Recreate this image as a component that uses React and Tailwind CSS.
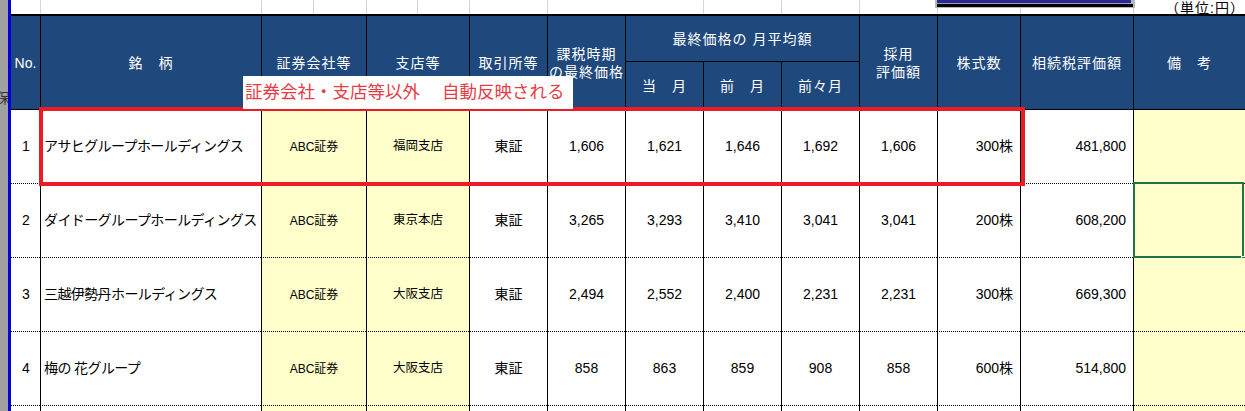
import React from "react";

const font = "font-['Liberation_Sans','Noto_Sans_CJK_JP',sans-serif]";
const cols =
  "grid grid-cols-[29px_221px_105px_103px_78px_78px_78px_78px_78px_78px_83px_113px_112px]";

const rows = [
  ["1", "アサヒグループホールディングス", "福岡支店", "1,606", "1,621", "1,646", "1,692", "1,606", "300株", "481,800"],
  ["2", "ダイドーグループホールディングス", "東京本店", "3,265", "3,293", "3,410", "3,041", "3,041", "200株", "608,200"],
  ["3", "三越伊勢丹ホールディングス", "大阪支店", "2,494", "2,552", "2,400", "2,231", "2,231", "300株", "669,300"],
  ["4", "梅の 花グループ", "大阪支店", "858", "863", "859", "908", "858", "600株", "514,800"],
  ["", "", "", "", "", "", "", "", "", ""],
];

const topCells = [29, 221, 52, 53, 51, 52, 78, 156, 78, 78, 78, 83, 113];

const Head = ({ className = "", children }) => (
  <div
    className={`bg-[#1f497d] text-white text-[14px] tracking-[1px] flex items-center justify-center text-center leading-[18px] border-b border-black ${className}`}
  >
    {children}
  </div>
);

// solid column rule on the left, dotted row rule underneath
const Cell = ({ className = "", children }) => (
  <div
    className={`relative flex items-center border-l border-b border-solid [border-bottom-style:dotted] border-black ${className}`}
  >
    {children}
  </div>
);

const App = () => {
  return (
    <div className={`relative w-[1245px] h-[411px] overflow-hidden bg-white flex text-black ${font}`}>
      {/* row header strip */}
      <div className="relative w-[8px] shrink-0 bg-[#a0a0a0] overflow-hidden">
        <span className="absolute top-[88px] right-[-2px] text-[14px] text-[#333]">保</span>
      </div>
      <div className="w-[3px] shrink-0 bg-[#0000e0]" />

      <div className="flex-1 flex flex-col">
        {/* blank sheet row */}
        <div className="flex h-[14px] shrink-0 overflow-hidden">
          {topCells.map((w, i) => (
            <div
              key={i}
              style={{ width: w }}
              className={`shrink-0 h-full ${i > 0 ? "border-l border-[#d6d6d6]" : ""}`}
            />
          ))}
          <div className="flex-1 border-l border-[#d6d6d6] flex justify-end items-end">
            <span className="text-[14px] leading-[14px] mb-[-1px] tracking-[1px] whitespace-nowrap">（単位:円）</span>
          </div>
        </div>

        {/* header */}
        <div className={`${cols} grid-rows-[46px_48px] shrink-0 border-t-2 border-black`}>
          <Head className="row-span-2 text-[12px] tracking-normal">No.</Head>
          <Head className="row-span-2 border-l">銘　柄</Head>
          <Head className="row-span-2 border-l">証券会社等</Head>
          <Head className="row-span-2 border-l">支店等</Head>
          <Head className="row-span-2 border-l">取引所等</Head>
          <Head className="row-span-2 border-l">
            課税時期
            <br />
            の最終価格
          </Head>
          <Head className="col-span-3 border-l">最終価格の 月平均額</Head>
          <Head className="row-span-2 border-l">
            採用
            <br />
            評価額
          </Head>
          <Head className="row-span-2 border-l">株式数</Head>
          <Head className="row-span-2 border-l">相続税評価額</Head>
          <Head className="row-span-2 border-l">備　考</Head>
          <Head className="col-start-7 row-start-2 border-l">当　月</Head>
          <Head className="col-start-8 row-start-2 border-l">前　月</Head>
          <Head className="col-start-9 row-start-2 border-l">前々月</Head>
        </div>

        {/* body */}
        {rows.map((r, i) => (
          <div key={i} className={`${cols} h-[74px] shrink-0 text-[14px]`}>
            <div className="flex items-center justify-center border-b border-dotted border-black pl-[1px]">
              {r[0]}
            </div>
            <Cell className="pl-[3px] tracking-[-0.6px] whitespace-nowrap">{r[1]}</Cell>
            <Cell className="bg-[#ffffcc] justify-center text-[12px]">{r[0] && "ABC証券"}</Cell>
            <Cell className="bg-[#ffffcc] justify-center text-[12.5px]">{r[2]}</Cell>
            <Cell className="justify-center">{r[0] && "東証"}</Cell>
            <Cell className="justify-center">{r[3]}</Cell>
            <Cell className="justify-center">{r[4]}</Cell>
            <Cell className="justify-center">{r[5]}</Cell>
            <Cell className="justify-center">{r[6]}</Cell>
            <Cell className="justify-center">{r[7]}</Cell>
            <Cell className="justify-end pr-[7px]">{r[8]}</Cell>
            <Cell className="justify-end pr-[7px]">{r[9]}</Cell>
            <Cell className="bg-[#ffffcc]">
              {i === 1 && (
                <>
                  <div className="absolute left-[-1px] top-[-2px] right-[1px] bottom-[-1px] border-2 border-[#217346]" />
                  <div className="absolute right-[-1px] bottom-[-4px] w-[5px] h-[5px] bg-[#217346] border border-white" />
                </>
              )}
            </Cell>
          </div>
        ))}
      </div>

      {/* macro button edge at the top */}
      <div className="absolute left-[935px] top-0 w-[200px] h-[8px] bg-[#b8b8b8]">
        <div className="ml-[2px] w-[194px] h-[3px] bg-[#2a2a8e]" />
        <div className="ml-[2px] w-[194px] h-[1px] bg-[#9a9ac8]" />
        <div className="ml-[2px] w-[196px] h-[3px] bg-black" />
      </div>

      {/* highlight box */}
      <div className="absolute left-[39px] top-[107px] w-[986px] h-[79px] border-4 border-[#ed1c24]" />

      {/* note */}
      <div className="absolute left-[243px] top-[76px] w-[330px] h-[33px] bg-white flex items-center pl-[2px] text-[17.5px] text-[#e63c46] whitespace-nowrap">
        <span>証券会社・支店等以外</span>
        <span className="ml-[22px]">自動反映される</span>
      </div>
    </div>
  );
};

export default App;
